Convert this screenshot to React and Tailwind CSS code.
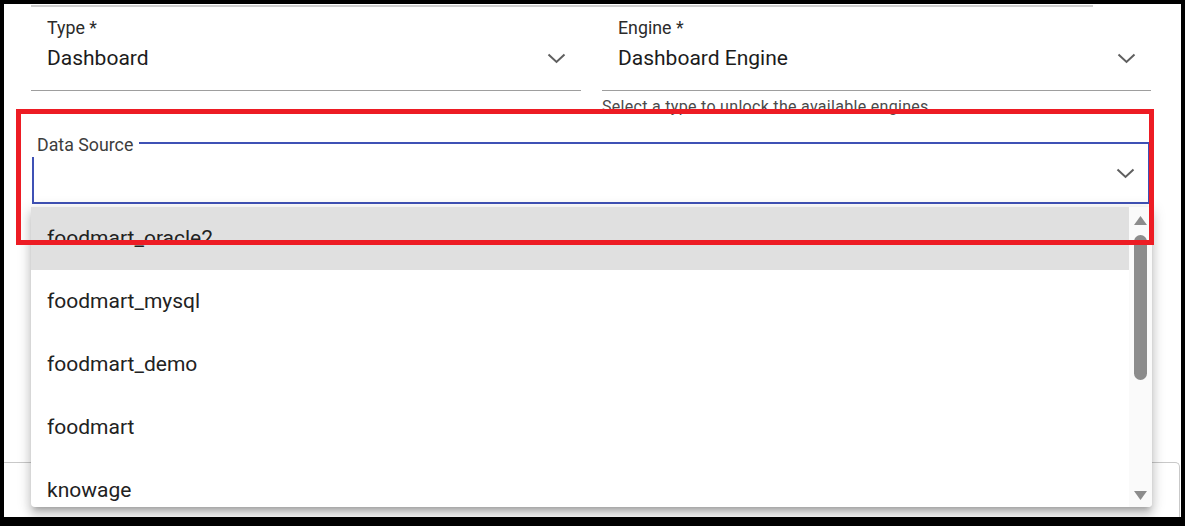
import React from "react"

const sources = [
  "foodmart_oracle2",
  "foodmart_mysql",
  "foodmart_demo",
  "foodmart",
  "knowage",
]

function Chevron() {
  return (
    <svg width="19" height="11" viewBox="0 0 19 11" className="shrink-0">
      <path
        d="M1.5 1.5 L9.5 9 L17.5 1.5"
        fill="none"
        stroke="#5f5f5f"
        strokeWidth="2"
      />
    </svg>
  )
}

function SelectField({ label, value, width }) {
  return (
    <div
      className={`${width} border-b border-[#9e9e9e] pt-[9px] pb-[17px] pl-[16px] pr-[15px]`}
    >
      <div className="h-[24px] text-[17.8px] leading-[24px] text-[#2b2b2b]">
        {label}
      </div>
      <div className="mt-[3px] flex h-[30px] items-center justify-between">
        <span className="text-[21px] leading-[30px] text-[#1c1c1c]">
          {value}
        </span>
        <Chevron />
      </div>
    </div>
  )
}

export default function App() {
  return (
    <div className="h-[526px] w-[1185px] bg-black pt-[4px] pr-[4px] pb-[9px] pl-[4px] font-['Roboto',sans-serif]">
      <div className="relative h-full overflow-hidden bg-white">
        {/* underline of the field above, scrolled out */}
        <div className="mt-[1px] ml-[27px] h-[2px] w-[1062px] bg-[#cfcfcf]" />

        {/* type / engine */}
        <div className="flex gap-[21px] pl-[27px]">
          <div>
            <SelectField label="Type *" value="Dashboard" width="w-[550px]" />
          </div>
          <div>
            <SelectField
              label="Engine *"
              value="Dashboard Engine"
              width="w-[549px]"
            />
            <div className="mt-[6px] h-[20px] text-[16px] leading-[20px] tracking-[0.3px] text-[#4a4a4a]">
              Select a type to unlock the available engines
            </div>
          </div>
        </div>

        {/* data source, focused */}
        <div className="relative mt-[25px] ml-[28px] flex h-[62px] w-[1118px] items-center justify-end border-2 border-[#3f51b5] pr-[13px]">
          <div className="absolute top-[-14px] left-[-4px] h-[27px] bg-white pr-[6px] pl-[7px] text-[17.8px] leading-[29px] text-[#3d3d3d]">
            Data Source
          </div>
          <Chevron />
        </div>

        {/* dialog footer edge */}
        <div className="mt-[258px] mr-[1px] h-[60px] rounded-tr-[5px] border-t border-r border-[#c9c9c9]" />

        {/* options menu */}
        <div className="absolute top-[203px] left-[27px] flex h-[300px] w-[1121px] overflow-hidden rounded-b-[4px] bg-white shadow-[0_5px_5px_-3px_rgba(0,0,0,0.2),0_8px_10px_1px_rgba(0,0,0,0.14),0_3px_14px_2px_rgba(0,0,0,0.12)]">
          <div className="w-[1098px]">
            {sources.map((s, i) => (
              <div
                key={s}
                className={`flex h-[63px] shrink-0 items-center pl-[16px] text-[21px] text-[#222222] ${
                  i === 0 ? "bg-[#e0e0e0]" : ""
                }`}
              >
                {s}
              </div>
            ))}
          </div>
          <div className="relative flex-1 bg-[#fafafa]">
            <svg
              width="15"
              height="11"
              viewBox="0 0 15 11"
              className="absolute top-[8px] left-[4px]"
            >
              <path d="M7.5 1 L14 10 L1 10 Z" fill="#8c8c8c" />
            </svg>
            <div className="absolute top-[28px] left-[5px] h-[145px] w-[13px] rounded-full bg-[#8c8c8c]" />
            <svg
              width="15"
              height="11"
              viewBox="0 0 15 11"
              className="absolute top-[283px] left-[4px]"
            >
              <path d="M1 1 L14 1 L7.5 10 Z" fill="#8c8c8c" />
            </svg>
          </div>
        </div>

        {/* highlight frame */}
        <div className="pointer-events-none absolute top-[105px] left-[12px] z-10 h-[136px] w-[1138px] border-[5px] border-[#ed1c24]" />
      </div>
    </div>
  )
}
